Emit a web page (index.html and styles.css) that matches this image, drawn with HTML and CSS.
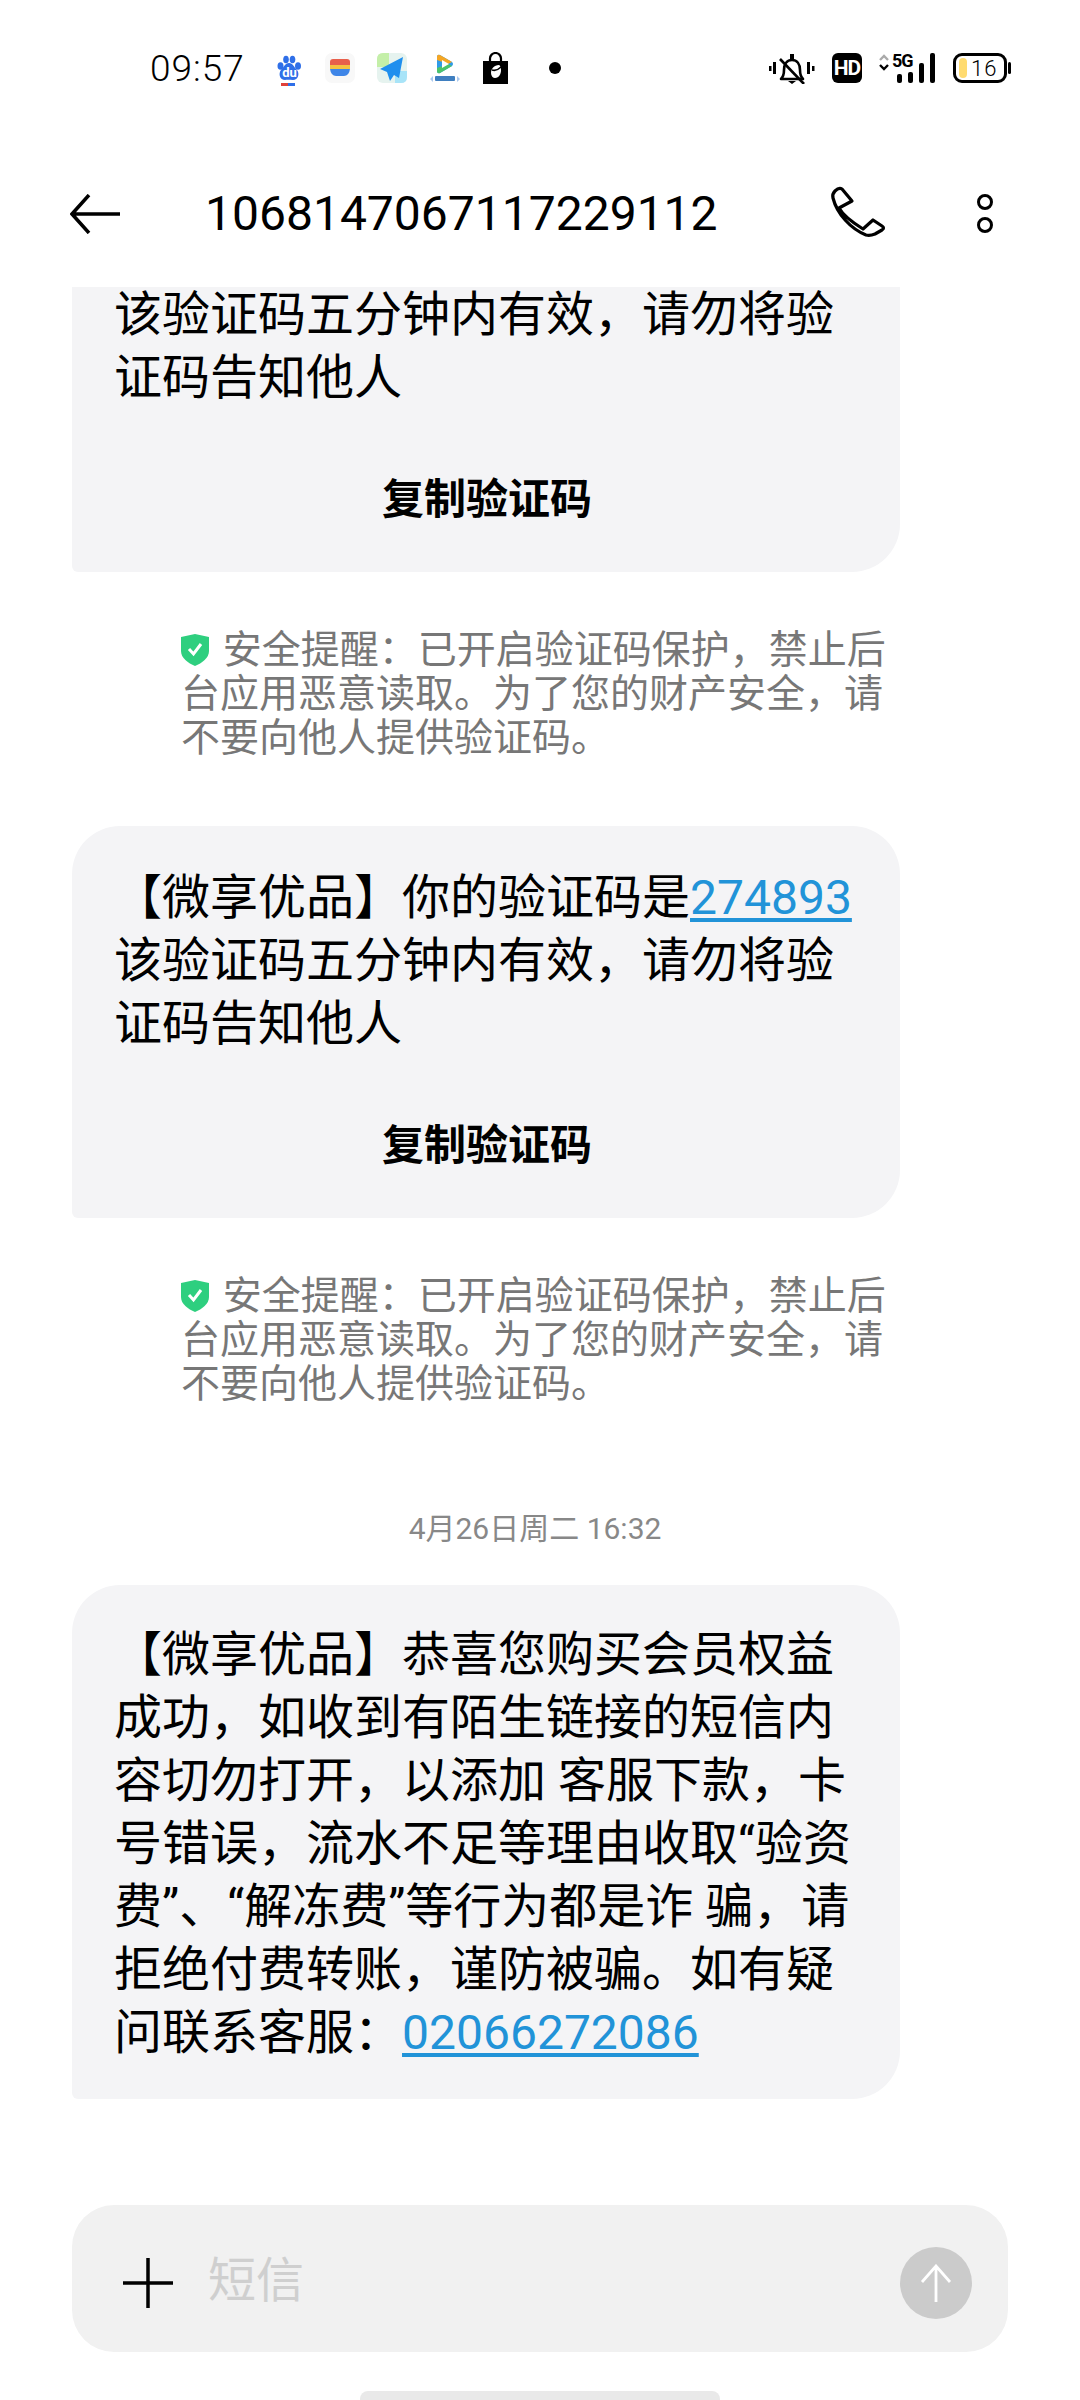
FILE: index.html
```html
<!DOCTYPE html>
<html lang="zh-CN">
<head>
    <meta charset="UTF-8">
    <title>短信</title>
    <link rel="stylesheet" href="styles.css">
</head>
<body>
<div class="phone">

    <div class="statusbar">
        <span class="clock">09:57</span>
        <div class="notify-icons">
            <svg class="baidu" width="26" height="32" viewBox="0 0 26 32"><g fill="#2f6fe8"><ellipse cx="3.500" cy="11" rx="3" ry="3.800"/><ellipse cx="9" cy="4.500" rx="2.800" ry="3.800"/><ellipse cx="15.500" cy="4.500" rx="2.800" ry="3.800"/><ellipse cx="21" cy="11" rx="3" ry="3.800"/><path d="M12 8c4 0 5 4 8 7 3 4 1 10-4 10-3 0-5-.5-8 0-5 0-7-6-4-10 3-3 4-7 8-7z"/></g><text x="12.500" y="22" class="du">du</text><rect x="4" y="28" width="7" height="3" fill="#e0413a"/><rect x="11" y="28" width="7" height="3" fill="#2f6fe8"/></svg>
            <svg width="30" height="30" viewBox="0 0 30 30"><rect width="30" height="30" rx="7" fill="#f8f8f8"/><path d="M5 9q0-3 3-3h14q3 0 3 3v3H5z" fill="#e8604c"/><path d="M5 12h20v4H5z" fill="#f5c242"/><path d="M5 16h20q-1 7-6 7h-8q-5 0-6-7z" fill="#3f86e8"/></svg>
            <svg width="30" height="30" viewBox="0 0 30 30"><rect width="30" height="30" rx="6" fill="#e6f3ef"/><path d="M0 6q0-6 6-6h6v14H0z" fill="#c4efa8"/><path d="M18 18h12v6q0 6-6 6h-6z" fill="#a8e4f8"/><path d="M26 4 3 16l7 3 3 9 4-6 5 3z" fill="#1f8fee"/></svg>
            <svg width="32" height="28" viewBox="0 0 32 28"><path d="M8 3q0-3 3-2l12 7q2 2 0 4L11 19q-3 1-3-2z" fill="#2f9be8"/><path d="M8 3q0-3 3-2l12 7-4 2-11-4z" fill="#f5a623"/><path d="M8 17q0 3 3 2l12-7-4-2-11 4z" fill="#4cc46a"/><path d="M13 6l7 4-7 4z" fill="#fff"/><path d="M1 25l3-3v6zM31 25l-3-3v6z" fill="#a9c8ee"/><rect x="6" y="22" width="20" height="5" rx="1" fill="#3f7fc0"/></svg>
            <svg width="25" height="32" viewBox="0 0 25 32"><path d="M7 9V6.500a5.500 5.500 0 0 1 11 0V9" fill="none" stroke="#000" stroke-width="2.200"/><path d="M0 9h25v23H0z"/><path d="M16 13c-5 0-8 4-8 8 0 3 2 5 4 5 4 0 6-4 6-8 0-2-1-5-2-5z" fill="#fff"/><path d="M9 18c3 1 6 0 9-3" fill="none" stroke="#000" stroke-width="1.500"/></svg>
            <span class="dot"></span>
        </div>
        <div class="sys-icons">
            <svg width="47" height="32" viewBox="6 4 47 32"><g fill="none" stroke="#000" stroke-width="2.600" stroke-linejoin="round"><path d="M19 31c2-2 3-4 3-9 0-6 3-10 8-10s8 4 8 10c0 5 1 7 3 9z"/><path d="M18 11l24 25"/></g><path d="M28 6h4v5h-4zM26 33h8l-4 3zM7 18h2.500v5H7zM11 14h3v12h-3zM45 14h3v12h-3zM50 18h2.500v5H50z"/></svg>
            <span class="hd">HD</span>
            <div class="signal">
                <svg width="10" height="20" viewBox="0 0 10 20"><path d="M1 7l4-4 4 4" fill="none" stroke="#aaa" stroke-width="2.400"/><path d="M1 12l4 4 4-4" fill="none" stroke="#000" stroke-width="2.400"/></svg>
                <span class="five-g">5G</span>
                <span class="bar b1"></span><span class="bar b2"></span><span class="bar b3"></span><span class="bar b4"></span>
            </div>
            <div class="battery"><div class="battery-body"><span class="battery-fill"></span><span class="battery-num">16</span></div><span class="battery-cap"></span></div>
        </div>
    </div>

    <div class="topbar">
        <svg class="back" width="50" height="40" viewBox="0 0 50 40"><path d="M50 20H3M19 1 2 20l17 19" fill="none" stroke="#000" stroke-width="3.500"/></svg>
        <span class="title">1068147067117229112</span>
        <svg class="call" width="70" height="65" viewBox="0 0 70 65"><path d="M17 8Q14 6 10 10 7 13 8 17C12 33 26 48 41 54Q45 55 50 53L57 49Q60 47 57 45L48 39 38 48C30 43 19 36 14 27L27 20Z" fill="none" stroke="#000" stroke-width="3.200" stroke-linejoin="round"/></svg>
        <div class="more"><span></span><span></span></div>
    </div>

    <div class="messages">
        <div class="bubble">
            <p class="msg">【微享优品】你的验证码是<a>274893</a><br>该验证码五分钟内有效，请勿将验<br>证码告知他人</p>
            <div class="copy">复制验证码</div>
        </div>
        <div class="notice">
            <svg class="shield" width="28" height="32" viewBox="0 0 28 32"><path d="M14 0l14 3v14c0 7-7 12-14 15C7 29 0 24 0 17V3z" fill="#2ecf7f"/><path d="M8 15l4.500 5L20 10" fill="none" stroke="#fff" stroke-width="3"/></svg>
            安全提醒：已开启验证码保护，禁止后台应用恶意读取。为了您的财产安全，请不要向他人提供验证码。
        </div>

        <div class="bubble">
            <p class="msg">【微享优品】你的验证码是<a>274893</a><br>该验证码五分钟内有效，请勿将验<br>证码告知他人</p>
            <div class="copy">复制验证码</div>
        </div>
        <div class="notice">
            <svg class="shield" width="28" height="32" viewBox="0 0 28 32"><path d="M14 0l14 3v14c0 7-7 12-14 15C7 29 0 24 0 17V3z" fill="#2ecf7f"/><path d="M8 15l4.500 5L20 10" fill="none" stroke="#fff" stroke-width="3"/></svg>
            安全提醒：已开启验证码保护，禁止后台应用恶意读取。为了您的财产安全，请不要向他人提供验证码。
        </div>

        <div class="stamp">4月26日周二 16:32</div>

        <div class="bubble last">
            <p class="msg">【微享优品】恭喜您购买会员权益成功，如收到有陌生链接的短信内容切勿打开，以添加 客服下款，卡号错误，流水不足等理由收取“验资费”、“解冻费”等行为都是诈 骗，请拒绝付费转账，谨防被骗。如有疑问联系客服：<a>02066272086</a></p>
        </div>
    </div>

    <div class="composer">
        <svg class="plus" width="50" height="50" viewBox="0 0 50 50"><path d="M25 0v50M0 25h50" stroke="#000" stroke-width="3.500"/></svg>
        <span class="hint">短信</span>
        <div class="send"><svg width="32" height="38" viewBox="0 0 32 38"><path d="M16 38V3M2 18 16 2l14 16" fill="none" stroke="#fff" stroke-width="2.800"/></svg></div>
    </div>
    <div class="handle"></div>
</div>
</body>
</html>
```

FILE: styles.css
```css
* {
    box-sizing: border-box;
}

body {
    margin: 0;
    background: #fff;
    font-family: Roboto, "Noto Sans CJK SC", sans-serif;
    color: #000;
}

.phone {
    width: 1080px;
    height: 2400px;
    display: flex;
    flex-direction: column;
    overflow: hidden;
}

/* status bar */
.statusbar {
    height: 136px;
    flex: none;
    display: flex;
    align-items: center;
    padding: 0 69px 0 150px;
}

.clock {
    font-size: 37px;
    font-weight: 300;
    width: 127px;
    letter-spacing: 1px;
}

.notify-icons {
    display: flex;
    align-items: center;
    gap: 22px;
}

.baidu {
    margin-top: 5px;
}

.du {
    font-size: 13px;
    font-weight: 700;
    fill: #fff;
    text-anchor: middle;
}

.dot {
    width: 12px;
    height: 12px;
    border-radius: 50%;
    background: #000;
    margin-left: 19px;
}

.sys-icons {
    margin-left: auto;
    display: flex;
    align-items: center;
    gap: 17px;
}

.hd {
    width: 30px;
    height: 30px;
    background: #000;
    color: #fff;
    border-radius: 6px;
    font-size: 21px;
    font-weight: 700;
    line-height: 30px;
    text-align: center;
    letter-spacing: -1px;
}

.signal {
    display: flex;
    align-items: flex-end;
    position: relative;
    width: 57px;
    height: 30px;
    gap: 6px;
}

.signal svg {
    position: absolute;
    left: 0;
    top: 0;
}

.five-g {
    position: absolute;
    left: 13px;
    top: -3px;
    font-size: 18px;
    font-weight: 700;
    letter-spacing: -1px;
}

.bar {
    width: 5px;
    background: #000;
    border-radius: 2px;
    flex: none;
}

.b1 { height: 9px; margin-left: 18px; }
.b2 { height: 11px; }
.b3 { height: 20px; }
.b4 { height: 30px; }

.battery {
    display: flex;
    align-items: center;
    gap: 1px;
}

.battery-body {
    width: 54px;
    height: 30px;
    border: 3px solid #000;
    border-radius: 9px;
    display: flex;
    align-items: center;
    padding: 0 3px;
}

.battery-fill {
    width: 8px;
    height: 20px;
    background: #ffdb70;
    border-radius: 4px;
    flex: none;
}

.battery-num {
    font-size: 22px;
    font-weight: 300;
    margin-left: 4px;
    letter-spacing: 1px;
}

.battery-cap {
    width: 3px;
    height: 12px;
    background: #000;
    border-radius: 2px;
}

/* title row */
.topbar {
    height: 151px;
    flex: none;
    display: flex;
    align-items: center;
    padding: 4px 0 0 70px;
}

.title {
    font-size: 48px;
    margin-left: 85px;
    width: 620px;
}

.more {
    margin-left: 82px;
    display: flex;
    flex-direction: column;
    gap: 7px;
}

.more span {
    display: block;
    width: 16px;
    height: 16px;
    border: 3.500px solid #000;
    border-radius: 50%;
}

/* conversation */
.messages {
    flex: 1;
    min-height: 0;
    overflow: hidden;
    display: flex;
    flex-direction: column;
    justify-content: flex-end;
    padding: 0 72px 106px;
}

.bubble {
    flex: none;
    width: 828px;
    background: #f4f4f6;
    border-radius: 48px 48px 48px 6px;
    padding: 40px 40px 0 42px;
    height: 392px;
}

.bubble.last {
    height: 514px;
    padding-top: 38px;
}

.msg {
    margin: 0;
    font-size: 48px;
    line-height: 63px;
}

.msg a {
    color: #2193d8;
    text-decoration: underline;
    text-underline-offset: 4px;
}

.copy {
    margin-top: 63px;
    text-align: center;
    font-size: 42px;
    font-weight: 700;
    line-height: 56px;
}

.notice {
    flex: none;
    width: 725px;
    margin: 56px 0 66px 109px;
    font-size: 39px;
    line-height: 44px;
    color: #777;
    height: 132px;
}

.shield {
    vertical-align: -3px;
    margin-right: 4px;
}

.stamp {
    flex: none;
    text-align: center;
    font-size: 30px;
    color: #888;
    line-height: 40px;
    margin: 37px 0 36px;
    padding-right: 10px;
}

/* bottom input */
.composer {
    flex: none;
    height: 147px;
    margin: 0 72px;
    background: #f1f1f1;
    border-radius: 42px;
    display: flex;
    align-items: center;
    padding: 0 36px 0 51px;
}

.plus {
    margin-top: 9px;
}

.hint {
    font-size: 48px;
    color: #cfcfcf;
    margin: 0 0 6px 35px;
}

.send {
    margin-left: auto;
    margin-top: 9px;
    width: 72px;
    height: 72px;
    border-radius: 50%;
    background: #cbcbcb;
    display: flex;
    align-items: center;
    justify-content: center;
}

.handle {
    flex: none;
    width: 360px;
    height: 9px;
    margin: 39px auto 0;
    background: #e9e9e9;
    border-radius: 8px 8px 0 0;
}
```
